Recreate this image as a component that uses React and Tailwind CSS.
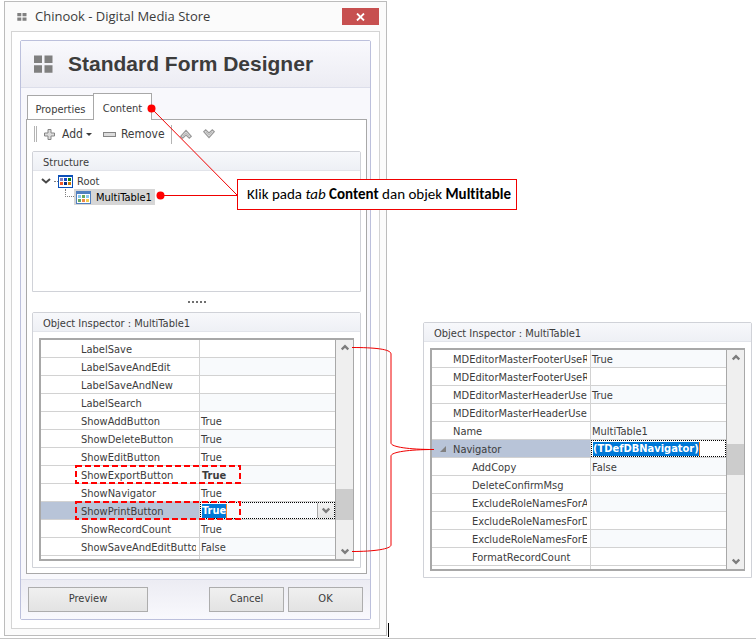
import React from "react";

const leftRows = [
  { name: "LabelSave", value: "" },
  { name: "LabelSaveAndEdit", value: "" },
  { name: "LabelSaveAndNew", value: "" },
  { name: "LabelSearch", value: "" },
  { name: "ShowAddButton", value: "True" },
  { name: "ShowDeleteButton", value: "True" },
  { name: "ShowEditButton", value: "True" },
  { name: "ShowExportButton", value: "True", bold: true },
  { name: "ShowNavigator", value: "True" },
  { name: "ShowPrintButton", value: "True", editing: true, dropdown: true },
  { name: "ShowRecordCount", value: "True" },
  { name: "ShowSaveAndEditButton", value: "False" },
];

const rightRows = [
  { name: "MDEditorMasterFooterUseR", value: "True" },
  { name: "MDEditorMasterFooterUseR", value: "" },
  { name: "MDEditorMasterHeaderUseR", value: "True" },
  { name: "MDEditorMasterHeaderUseR", value: "" },
  { name: "Name", value: "MultiTable1" },
  { name: "Navigator", value: "(TDefDBNavigator)", editing: true, expanded: true },
  { name: "AddCopy", value: "False", nested: true },
  { name: "DeleteConfirmMsg", value: "", nested: true },
  { name: "ExcludeRoleNamesForAd", value: "", nested: true },
  { name: "ExcludeRoleNamesForDe", value: "", nested: true },
  { name: "ExcludeRoleNamesForEd", value: "", nested: true },
  { name: "FormatRecordCount", value: "", nested: true },
];

function Chevron({ up = false }) {
  return (
    <svg width="8" height="7" viewBox="0 0 8 7" className="block" aria-hidden="true">
      <path d={up ? "M0.7 5.500 L4 2.2 L7.3 5.500" : "M0.7 1.500 L4 4.800 L7.3 1.500"} fill="none" stroke="#7c7c7c" strokeWidth="2.4" />
    </svg>
  );
}

function AppIcon() {
  return (
    <svg width="10" height="8" viewBox="0 0 10 8" className="block shrink-0" fill="#808080" aria-hidden="true">
      <path d="M0.3 0h4v3.300h-4z M5.500 0h4v3.300h-4z M0.3 4.500h4v3.300h-4z M5.500 4.500h4v3.300h-4z" />
    </svg>
  );
}

function FormIcon() {
  return (
    <svg width="19" height="18" viewBox="0 0 19 18" className="block shrink-0" fill="#808080" aria-hidden="true">
      <path d="M0 0.500h8v7.500h-8z M10.500 0.500h8v7.500h-8z M0 10.300h8v7.500h-8z M10.500 10.300h8v7.500h-8z" />
    </svg>
  );
}

function GroupBox({ title, children }) {
  return (
    <section className="rounded-t-[2px] border border-[#d0d2d8] bg-white">
      <h2 className="h-[19px] border-b border-[#e2e4ea] bg-linear-to-b from-[#f7f8fb] to-[#eef0f5] px-2.5 text-[11px] leading-[22px] text-[#3c3c3c]">
        {title}
      </h2>
      {children}
    </section>
  );
}

function ValueEditor({ row }) {
  return (
    <div className={"flex h-[17px] items-center border border-dotted border-black pl-px " + (row.dropdown ? "bg-[#f8fafc]" : "bg-white")}>
      <div className="flex min-w-0 flex-1 items-center">
        <input
          aria-label={row.name}
          defaultValue={row.value}
          className="field-sizing-content h-[14px] border-r border-[#ff8728] bg-[#0078d7] p-0 text-[11px] font-bold leading-[14px] text-white outline-none"
        />
      </div>
      {row.dropdown && (
        <button
          type="button"
          aria-label="Open list"
          className="flex h-[15px] w-[17px] items-center justify-center border-l border-[#a8a8a8] bg-linear-to-b from-[#f2f2f2] to-[#e4e4e4]"
        >
          <Chevron />
        </button>
      )}
    </div>
  );
}

function PropertyGrid({ rows, tintOffset, thumbGrow, restGrow }) {
  return (
    <div className="m-1.5 flex h-[223px] border-2 border-r border-[#a8a8a8]">
      <div className="min-w-0 flex-1 overflow-hidden">
        <table className="w-full table-fixed border-separate border-spacing-0 text-[11px] leading-[19px] text-[#3c3c3c]">
          <colgroup>
            <col className="w-[159px]" />
            <col />
          </colgroup>
          <tbody>
            {rows.map((row, i) => (
              <tr key={i} className="h-[18px]">
                <th
                  scope="row"
                  className={
                    "border-b border-r border-[#d2d2d2] p-0 text-left font-normal " +
                    (row.editing ? "bg-[#b8c4d8]" : "bg-white")
                  }
                >
                  <div
                    className={
                      "mr-[3px] flex h-[17px] items-start overflow-hidden whitespace-nowrap " +
                      (row.nested || tintOffset === 1 ? "pl-10" : row.expanded ? "pl-2" : "pl-[21px]")
                    }
                  >
                    {row.expanded && (
                      <svg width="6" height="6" className="mr-[7px] shrink-0 self-center" aria-hidden="true">
                        <path d="M6 0 V6 H0 Z" fill="#808080" />
                      </svg>
                    )}
                    {row.name}
                  </div>
                </th>
                <td
                  className={
                    "overflow-hidden border-b border-[#d2d2d2] p-0 whitespace-nowrap " +
                    (i % 2 === tintOffset ? "bg-[#f8fafc] " : "bg-white ") +
                    (row.bold ? "font-bold" : "")
                  }
                >
                  {row.editing ? <ValueEditor row={row} /> : <div className={"h-[17px] " + (row.bold ? "px-0.5" : "px-px")}>{row.value}</div>}
                </td>
              </tr>
            ))}
            <tr className="h-[18px]">
              <td className="border-r border-[#d2d2d2] p-0" />
              <td className="p-0" />
            </tr>
          </tbody>
        </table>
      </div>
      <div className="flex w-[18px] flex-col border-l border-[#a8a8a8] bg-[#efefef]">
        <button type="button" aria-label="Scroll up" className="flex h-[15px] shrink-0 items-center justify-center">
          <Chevron up />
        </button>
        <div className={thumbGrow} />
        <div className="h-[31px] shrink-0 bg-[#cccccc]" />
        <div className={restGrow} />
        <button type="button" aria-label="Scroll down" className="flex h-[15px] shrink-0 items-center justify-center">
          <Chevron />
        </button>
      </div>
    </div>
  );
}

function RootIcon() {
  return (
    <svg width="15" height="13" viewBox="0 0 15 13" className="block" aria-hidden="true">
      <rect width="15" height="13" fill="#0c50b8" />
      <rect x="1" y="2" width="13" height="10" fill="#fff" />
      <rect x="2" y="3" width="3" height="3" fill="#8080c0" />
      <rect x="6" y="3" width="3" height="3" fill="#1448c8" />
      <rect x="10" y="3" width="3" height="3" fill="#0a8018" />
      <rect x="2" y="7" width="3" height="3" fill="#f05828" />
      <rect x="6" y="7" width="3" height="3" fill="#083080" />
      <rect x="10" y="7" width="3" height="3" fill="#d07800" />
    </svg>
  );
}

function TableIcon() {
  return (
    <svg width="15" height="13" viewBox="0 0 15 13" className="block" aria-hidden="true">
      <rect width="15" height="13" fill="#5080c0" />
      <rect x="1" y="3" width="13" height="9" fill="#fff" />
      <rect x="2" y="4" width="3" height="3" fill="#88c8f0" />
      <rect x="6" y="4" width="3" height="3" fill="#68a860" />
      <rect x="10" y="4" width="3" height="3" fill="#88c8f0" />
      <rect x="2" y="8" width="3" height="3" fill="#68a860" />
      <rect x="6" y="8" width="3" height="3" fill="#f08848" />
      <rect x="10" y="8" width="3" height="3" fill="#f0cc50" />
    </svg>
  );
}

function DoubleChevron({ up = false }) {
  return (
    <svg width="12" height="10" viewBox="0 0 12 10" className="block" aria-hidden="true">
      <path
        d="M0.7 2.7 L2.7 0.9 L6 4 L9.3 0.9 L11.3 2.7 L6 8.6 Z"
        transform={up ? "rotate(180 6 5)" : undefined}
        fill="#dcdcdc"
        stroke="#9a9a9a"
        strokeWidth="1.2"
      />
      <path d="M3 3 L6 6 L9 3" transform={up ? "rotate(180 6 5)" : undefined} fill="none" stroke="#b4b4b4" strokeWidth="0.8" />
    </svg>
  );
}

function Toolbar() {
  return (
    <div className="flex h-[31px] items-center pb-[3px] pl-[7px] text-[12px] text-[#3c3c3c]">
      <div className="mr-1.5 h-4 w-[3px] border-x border-[#b4b4b4]" />
      <button type="button" className="flex items-center">
        <svg width="13" height="13" viewBox="0 0 13 13" className="mr-1.5" aria-hidden="true">
          <path d="M5 1.500h3v3.500h3.500v3h-3.500v3.500h-3v-3.500h-3.500v-3h3.500z" fill="#dcdcdc" stroke="#858585" />
        </svg>
        Add
        <svg width="6" height="3" className="ml-[3px]" aria-hidden="true">
          <path d="M0 0 H6 L3 3 Z" fill="#3c3c3c" />
        </svg>
      </button>
      <button type="button" className="ml-[11px] flex items-center">
        <svg width="13" height="5" className="mr-[5px]" aria-hidden="true">
          <rect x="0.5" y="0.5" width="12" height="4" fill="#dcdcdc" stroke="#858585" />
        </svg>
        Remove
      </button>
      <div className="mr-[7px] ml-1.5 h-[19px] w-px bg-[#b4b4b4]" />
      <button type="button" aria-label="Move up" className="ml-px">
        <DoubleChevron up />
      </button>
      <button type="button" aria-label="Move down" className="ml-[11px]">
        <DoubleChevron />
      </button>
    </div>
  );
}

function StructureTree() {
  return (
    <ul className="h-[120px] pt-0.5 text-[11px] text-[#3c3c3c]">
      <li>
        <div className="flex h-4 items-center pl-2">
          <svg width="10" height="6" viewBox="0 0 10 6" className="shrink-0" aria-hidden="true">
            <path d="M1 0.9 L5 4.500 L9 0.9" fill="none" stroke="#484848" strokeWidth="2" />
          </svg>
          <div className="ml-[3px] w-1 border-t border-dotted border-[#808080]" />
          <RootIcon />
          <span className="ml-[3px] px-px pt-0.5">Root</span>
        </div>
        <ul>
          <li className="flex h-4 pl-8">
            <div className="h-2 w-[9px] border-b border-l border-dotted border-[#808080]" />
            <div className="flex items-center bg-[#d6d6d6] pr-[3px] pl-0.5 text-black">
              <TableIcon />
              <span className="ml-[5px] pt-0.5">MultiTable1</span>
            </div>
          </li>
        </ul>
      </li>
    </ul>
  );
}

const buttonClass =
  "h-[25px] border border-[#adadad] bg-linear-to-b from-[#f0f0f0] to-[#e3e3e3] text-[11px] text-[#3c3c3c]";

function DesignerWindow() {
  return (
    <main className="border border-[#bcbcbc] bg-[#fbfbfb] px-1.5 pb-1.5">
      <div className="flex h-[29px] items-center pr-px pl-1.5">
        <AppIcon />
        <span className="ml-2 flex-1 font-['Open_Sans',sans-serif] text-[13px] text-[#3c3c3c]">
          Chinook - Digital Media Store
        </span>
        <button type="button" aria-label="Close" className="flex h-[17px] w-[37px] items-center justify-center bg-[#c75050]">
          <svg width="9" height="8" viewBox="0 0 9 8" aria-hidden="true">
            <path d="M1 0.5 L8 7.500 M8 0.5 L1 7.500" stroke="#fff" strokeWidth="1.8" />
          </svg>
        </button>
      </div>
      <div className="border border-[#d4d4d4] bg-white p-2">
        <div className="rounded-[2px] border border-[#bcc0dc] bg-[#f8f8fc]">
          <header className="flex h-[47px] items-center border-b border-[#dcdeea] bg-linear-to-b from-[#f9f9fd] to-[#ececf3] pl-[13px]">
            <FormIcon />
            <h1 className="ml-[15px] font-['Liberation_Sans',Arial,sans-serif] text-[21px] leading-7 font-bold text-[#3c3c3c]">
              Standard Form Designer
            </h1>
          </header>
          <div className="pt-[5px] pr-[3px] pl-[5px]">
            <div role="tablist" className="flex items-end pl-px text-[11px] text-[#3c3c3c]">
              <button type="button" role="tab" aria-selected="false" className="h-6 w-[66px] border border-r-0 border-b-0 border-[#a8a8a8] bg-white pt-1.5">
                Properties
              </button>
              <button type="button" role="tab" aria-selected="true" className="z-10 -mb-px h-[27px] w-[59px] border border-b-0 border-[#a8a8a8] bg-white pt-1">
                Content
              </button>
            </div>
            <div role="tabpanel" className="border border-[#a8a8a8] bg-white px-[5px] pb-[5px]">
              <div className="-ml-[5px]">
                <Toolbar />
              </div>
              <GroupBox title="Structure">
                <StructureTree />
              </GroupBox>
              <div className="flex h-5 items-center justify-center gap-0.5" aria-hidden="true">
                {[0, 1, 2, 3, 4].map((n) => (
                  <span key={n} className="size-0.5 bg-[#707070]" />
                ))}
              </div>
              <GroupBox title="Object Inspector : MultiTable1">
                <PropertyGrid rows={leftRows} tintOffset={1} thumbGrow="grow-[134]" restGrow="grow-[24]" />
              </GroupBox>
            </div>
          </div>
          <footer className="mt-[5px] flex h-10 items-center border-t border-[#dcdeea] bg-linear-to-b from-[#ececf3] to-[#f9f9fd] px-[7px]">
            <button type="button" className={buttonClass + " w-[120px]"}>Preview</button>
            <button type="button" className={buttonClass + " mr-1 ml-auto w-[75px]"}>Cancel</button>
            <button type="button" className={buttonClass + " w-[75px]"}>OK</button>
          </footer>
        </div>
      </div>
    </main>
  );
}

function Annotations() {
  return (
    <div className="pointer-events-none absolute top-0 left-0 z-20">
      <svg width="756" height="638" viewBox="0 0 756 638" className="block" fill="none" aria-hidden="true">
        <g stroke="#f00000">
          <path d="M151 108 L237 195" />
          <path d="M160 195.500 H237" />
          <path d="M352 347.500 C374 347.500 391 349 391 354 V443 C391 447 409 449.500 434 449.500 C409 449.500 391 452 391 456 V545 C391 549 374 551.500 352 551.500" />
        </g>
        <circle cx="151.500" cy="108.500" r="4" fill="#ff0000" />
        <circle cx="160.500" cy="195.500" r="4" fill="#ff0000" />
        <g stroke="#ff0000" strokeWidth="2" strokeDasharray="6 3">
          <rect x="76" y="466" width="164" height="17" />
          <rect x="76" y="502" width="164" height="17" />
        </g>
        <path d="M388.500 623 V637" stroke="#000" />
      </svg>
      <p className="absolute top-[179px] left-[237px] w-[280px] border border-[#f00000] bg-white pl-[9px] font-['Carlito','Lato',sans-serif] text-[15px] leading-[29px] whitespace-nowrap text-black [font-variant-ligatures:none]">
        Klik pada <em>tab</em> <strong>Content</strong> dan objek <strong>Multitable</strong>
      </p>
    </div>
  );
}

export default function App() {
  return (
    <div className="relative min-h-screen border-b border-[#c4c4c4] bg-white px-1 pt-px font-['DejaVu_Sans_Condensed','DejaVu_Sans',sans-serif]">
      <div className="grid grid-cols-[383fr_329fr] items-start gap-9">
        <DesignerWindow />
        <aside className="pt-[321px]">
          <GroupBox title="Object Inspector : MultiTable1">
            <PropertyGrid rows={rightRows} tintOffset={0} thumbGrow="grow-[79]" restGrow="grow-[79]" />
          </GroupBox>
        </aside>
      </div>
      <Annotations />
    </div>
  );
}
